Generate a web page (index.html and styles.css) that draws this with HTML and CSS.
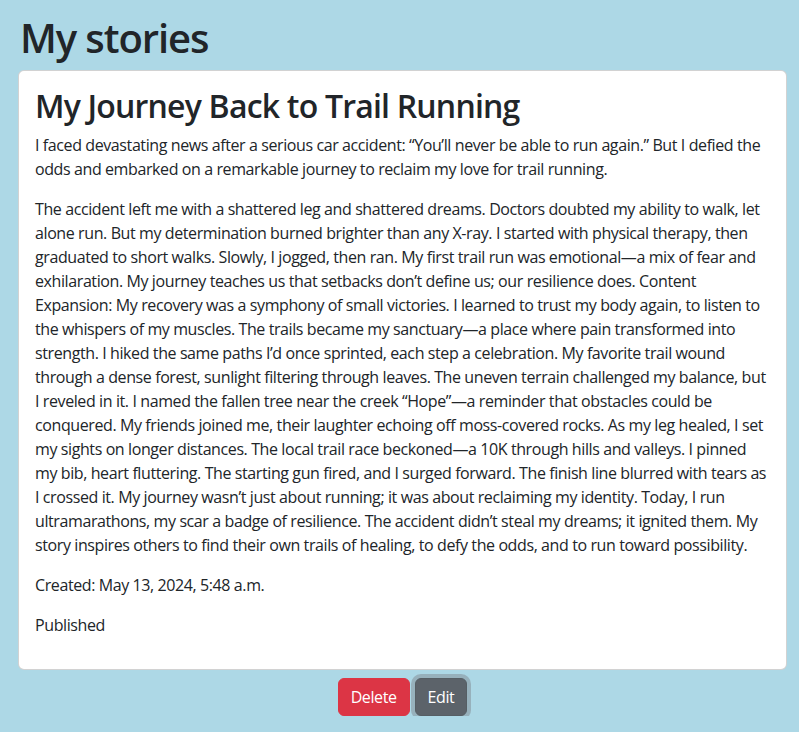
FILE: index.html
```html
<!DOCTYPE html>
<html lang="en">
<head>
<meta charset="utf-8">
<title>My stories</title>
<link rel="stylesheet" href="styles.css">
</head>
<body>
<main class="page">
  <h1 class="page-title">My stories</h1>
  <article class="card">
    <div class="card-body">
      <h2 class="card-title">My Journey Back to Trail Running</h2>
      <p class="card-text">I faced devastating news after a serious car accident: “You’ll never be able to run again.” But I defied the odds and embarked on a remarkable journey to reclaim my love for trail running.</p>
      <p class="card-text">The accident left me with a shattered leg and shattered dreams. Doctors doubted my ability to walk, let alone run. But my determination burned brighter than any X-ray. I started with physical therapy, then graduated to short walks. Slowly, I jogged, then ran. My first trail run was emotional—a mix of fear and exhilaration. My journey teaches us that setbacks don’t define us; our resilience does. Content Expansion: My recovery was a symphony of small victories. I learned to trust my body again, to listen to the whispers of my muscles. The trails became my sanctuary—a place where pain transformed into strength. I hiked the same paths I’d once sprinted, each step a celebration. My favorite trail wound through a dense forest, sunlight filtering through leaves. The uneven terrain challenged my balance, but I reveled in it. I named the fallen tree near the creek “Hope”—a reminder that obstacles could be conquered. My friends joined me, their laughter echoing off moss-covered rocks. As my leg healed, I set my sights on longer distances. The local trail race beckoned—a 10K through hills and valleys. I pinned my bib, heart fluttering. The starting gun fired, and I surged forward. The finish line blurred with tears as I crossed it. My journey wasn’t just about running; it was about reclaiming my identity. Today, I run ultramarathons, my scar a badge of resilience. The accident didn’t steal my dreams; it ignited them. My story inspires others to find their own trails of healing, to defy the odds, and to run toward possibility.</p>
      <p class="card-text">Created: May 13, 2024, 5:48 a.m.</p>
      <p class="card-text">Published</p>
    </div>
  </article>
  <div class="actions">
    <button type="button" class="btn btn-danger">Delete</button>
    <button type="button" class="btn btn-secondary is-focused">Edit</button>
  </div>
</main>
</body>
</html>
```
FILE: styles.css
```css
*,*::before,*::after{box-sizing:border-box;}
html,body{margin:0;padding:0;}
body{
  background:#add8e6;
  color:#212529;
  font-family:"Open Sans","Noto Sans",sans-serif;
  font-size:16px;
  line-height:24px;
  letter-spacing:-0.4px;
}
.page{
  padding:14px 12px 0 18px;
}
.page-title{
  margin:0 0 8px 2px;
  font-size:40px;
  line-height:48px;
  font-weight:600;
  letter-spacing:-1.1px;
}
.card{
  background:#fff;
  border:1px solid rgba(0,0,0,.175);
  border-radius:6px;
}
.card-body{
  padding:16px;
}
.card-title{
  margin:0 0 8px;
  font-size:32px;
  line-height:38px;
  font-weight:600;
  letter-spacing:-0.8px;
}
.card-text{
  margin:0 0 16px;
}
.actions{
  display:flex;
  justify-content:center;
  gap:5px;
  margin-top:8px;
}
.btn{
  font-family:inherit;
  font-size:16px;
  line-height:24px;
  letter-spacing:-0.4px;
  padding:6px 12px;
  border:1px solid transparent;
  border-radius:6px;
  color:#fff;
  cursor:pointer;
}
.btn-danger{background:#dc3545;border-color:#dc3545;}
.btn-secondary{background:#5c636a;border-color:#565e64;}
.is-focused{box-shadow:0 0 0 4px rgba(130,138,145,.5);}
```
